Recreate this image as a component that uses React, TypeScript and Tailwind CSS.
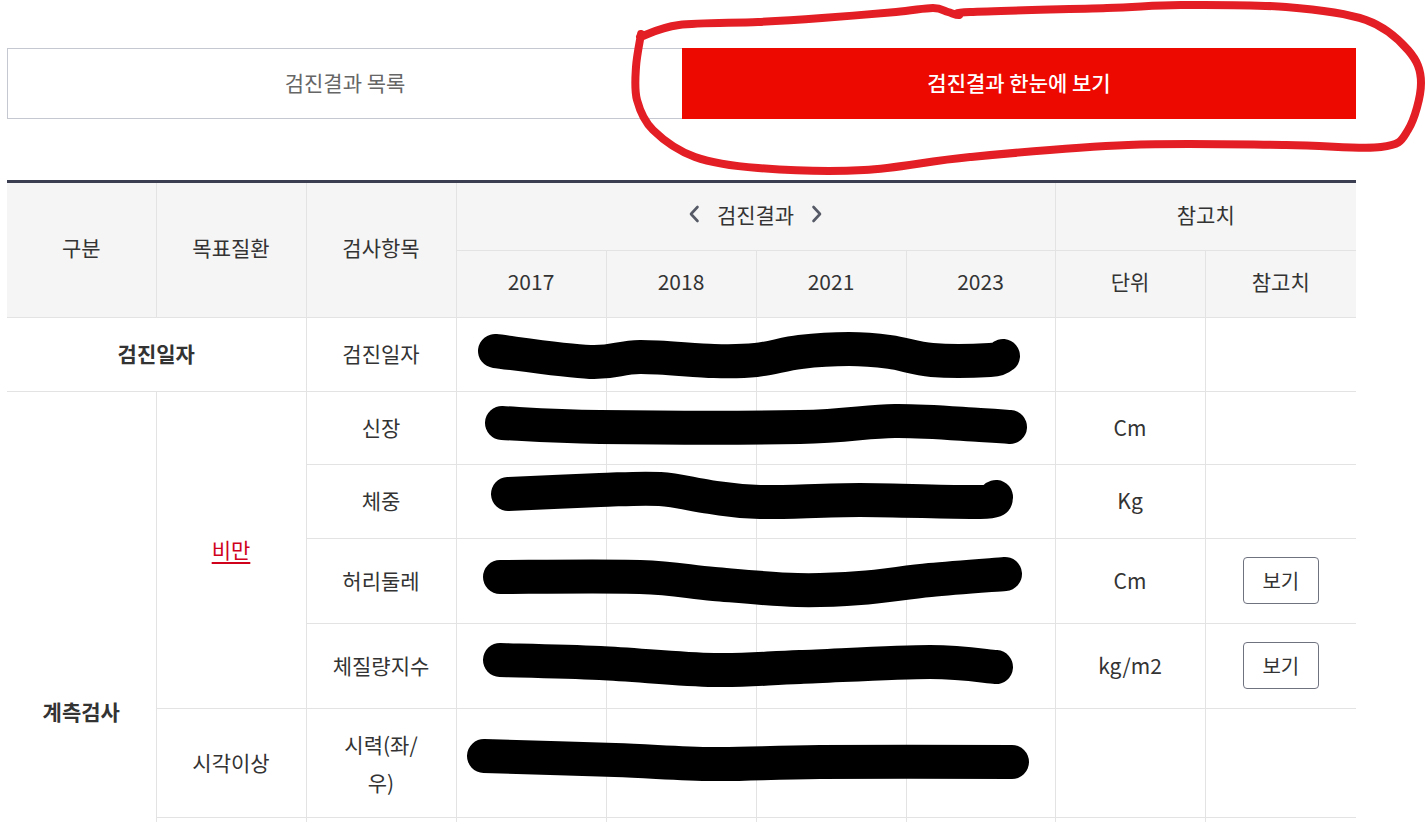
import React from "react";

type Pt = [number, number];

function smooth(points: Pt[]): string {
  if (points.length < 2) return "";
  let d = `M ${points[0][0]} ${points[0][1]}`;
  for (let i = 0; i < points.length - 1; i++) {
    const p0 = points[i - 1] || points[i];
    const p1 = points[i];
    const p2 = points[i + 1];
    const p3 = points[i + 2] || p2;
    const c1x = p1[0] + (p2[0] - p0[0]) / 6;
    const c1y = p1[1] + (p2[1] - p0[1]) / 6;
    const c2x = p2[0] - (p3[0] - p1[0]) / 6;
    const c2y = p2[1] - (p3[1] - p1[1]) / 6;
    d += ` C ${c1x} ${c1y} ${c2x} ${c2y} ${p2[0]} ${p2[1]}`;
  }
  return d;
}

const scribbles: Pt[][] = [
  [[495, 351], [590, 362], [640, 357], [714, 361], [756, 360], [800, 352], [849, 349], [890, 352], [932, 360], [990, 360], [1003, 356]],
  [[502, 423], [600, 427], [800, 427], [895, 421], [980, 425], [1010, 427]],
  [[508, 494], [600, 490], [660, 489], [710, 497], [760, 502], [860, 500], [980, 502], [996, 497]],
  [[500, 577], [640, 577], [714, 584], [797, 590], [860, 588], [930, 580], [1005, 574]],
  [[500, 660], [600, 663], [714, 670], [800, 667], [930, 662], [996, 667]],
  [[484, 756], [615, 760], [714, 764], [820, 762], [1012, 762]],
];

const loop: Pt[] = [
  [640, 37], [679, 25], [758, 22], [822, 18], [896, 12], [933, 8], [948, 12], [959, 15], [970, 12],
  [1107, 8], [1181, 5], [1286, 7], [1366, 20], [1408, 50], [1421, 83], [1408, 130], [1381, 147],
  [1286, 145], [1128, 145], [970, 157], [864, 170], [758, 168], [695, 157], [653, 130], [637, 100],
  [636, 67], [641, 34],
];

const th = "border border-[#e3e3e3] bg-[#f5f5f5] font-normal text-[#333] text-[21px] align-middle text-center pb-[4px]";
const td = "border border-[#e3e3e3] text-[#333] text-[21px] align-middle text-center";

function ViewBtn() {
  return (
    <button className="w-[76px] h-[47px] rounded-[4px] border border-[#6f7380] bg-white text-[20px] text-[#333] leading-none">
      보기
    </button>
  );
}

function Empty({ last }: { last?: boolean }) {
  return <td className={last ? `${td} border-r-0` : td}></td>;
}

export default function App() {
  return (
    <div
      className="relative w-[1428px] min-h-[822px] bg-white overflow-hidden"
      style={{ fontFamily: '"Noto Sans CJK KR", "Noto Sans", sans-serif' }}
    >
      <div className="pl-[7px] pr-[72px] pt-[48px]">
        <div className="flex h-[71px]">
          <div className="flex-1 flex items-center justify-center border border-[#c5c8d0] border-r-0 text-[21px] text-[#666] pb-[2px]">
            검진결과 목록
          </div>
          <div className="flex-1 flex items-center justify-center bg-[#ee0900] text-[21px] text-white font-medium pb-[2px]">
            검진결과 한눈에 보기
          </div>
        </div>

        <div className="mt-[61px] border-t-[3px] border-[#3b3e50]">
          <table className="w-[1349px] table-fixed border-collapse">
            <colgroup>
              <col className="w-[149px]" />
              <col className="w-[150px]" />
              <col className="w-[150px]" />
              <col className="w-[150px]" />
              <col className="w-[150px]" />
              <col className="w-[150px]" />
              <col className="w-[149px]" />
              <col className="w-[150px]" />
              <col className="w-[151px]" />
            </colgroup>
            <thead>
              <tr className="h-[67px]">
                <th rowSpan={2} className={`${th} border-l-0 border-t-0`}>구분</th>
                <th rowSpan={2} className={`${th} border-t-0`}>목표질환</th>
                <th rowSpan={2} className={`${th} border-t-0`}>검사항목</th>
                <th colSpan={4} className={`${th} border-t-0`}>
                  <div className="flex items-center justify-center gap-[17px]">
                    <svg width="12" height="18" viewBox="0 0 12 18" fill="none">
                      <path d="M9.5 2 L3 9 L9.5 16" stroke="#555a66" strokeWidth="2.6" strokeLinecap="round" strokeLinejoin="round" />
                    </svg>
                    <span>검진결과</span>
                    <svg width="12" height="18" viewBox="0 0 12 18" fill="none">
                      <path d="M2.5 2 L9 9 L2.5 16" stroke="#555a66" strokeWidth="2.6" strokeLinecap="round" strokeLinejoin="round" />
                    </svg>
                  </div>
                </th>
                <th colSpan={2} className={`${th} border-t-0 border-r-0`}>참고치</th>
              </tr>
              <tr className="h-[67px]">
                <th className={th}>2017</th>
                <th className={th}>2018</th>
                <th className={th}>2021</th>
                <th className={th}>2023</th>
                <th className={th}>단위</th>
                <th className={`${th} border-r-0`}>참고치</th>
              </tr>
            </thead>
            <tbody>
              <tr className="h-[74px]">
                <td colSpan={2} className={`${td} border-l-0 font-bold`}>검진일자</td>
                <td className={td}>검진일자</td>
                <Empty />
                <Empty />
                <Empty />
                <Empty />
                <Empty />
                <Empty last />
              </tr>
              <tr className="h-[73px]">
                <td rowSpan={6} className={`${td} border-l-0 font-bold`}>
                  <div className="pt-[106px]">계측검사</div>
                </td>
                <td rowSpan={4} className={td}>
                  <span className="text-[#d0021b] underline underline-offset-[4px]">비만</span>
                </td>
                <td className={td}>신장</td>
                <Empty />
                <Empty />
                <Empty />
                <Empty />
                <td className={td}>Cm</td>
                <Empty last />
              </tr>
              <tr className="h-[74px]">
                <td className={td}>체중</td>
                <Empty />
                <Empty />
                <Empty />
                <Empty />
                <td className={td}>Kg</td>
                <Empty last />
              </tr>
              <tr className="h-[85px]">
                <td className={td}>허리둘레</td>
                <Empty />
                <Empty />
                <Empty />
                <Empty />
                <td className={td}>Cm</td>
                <td className={`${td} border-r-0`}>
                  <ViewBtn />
                </td>
              </tr>
              <tr className="h-[85px]">
                <td className={td}>체질량지수</td>
                <Empty />
                <Empty />
                <Empty />
                <Empty />
                <td className={td}>kg/m2</td>
                <td className={`${td} border-r-0`}>
                  <ViewBtn />
                </td>
              </tr>
              <tr className="h-[109px]">
                <td className={td}>시각이상</td>
                <td className={`${td} leading-[38px]`}>
                  시력(좌/
                  <br />
                  우)
                </td>
                <Empty />
                <Empty />
                <Empty />
                <Empty />
                <Empty />
                <Empty last />
              </tr>
              <tr className="h-[109px]">
                <Empty />
                <Empty />
                <Empty />
                <Empty />
                <Empty />
                <Empty />
                <Empty />
                <Empty last />
              </tr>
            </tbody>
          </table>
        </div>
      </div>

      <svg
        className="absolute left-0 top-0 pointer-events-none"
        width="1428"
        height="822"
        viewBox="0 0 1428 822"
        fill="none"
      >
        {scribbles.map((pts, i) => (
          <path key={i} d={smooth(pts)} stroke="#000" strokeWidth="34" strokeLinecap="round" strokeLinejoin="round" />
        ))}
        <path d={smooth(loop)} stroke="#e31e24" strokeWidth="8" strokeLinecap="round" strokeLinejoin="round" />
      </svg>
    </div>
  );
}
